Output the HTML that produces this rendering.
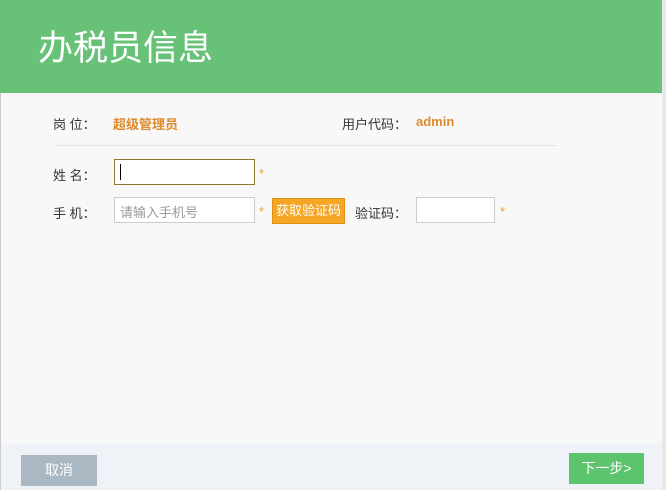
<!DOCTYPE html><html><head><meta charset="utf-8"><style>
*{margin:0;padding:0;box-sizing:border-box}
body{width:666px;height:490px;background:#fff;font-family:"Liberation Sans","Noto Sans CJK SC",sans-serif;font-size:13px;color:#333;position:relative;overflow:hidden}
#p{position:absolute;left:0;top:0;width:662px;height:490px;background:#f8f8f8}
#h{position:absolute;left:0;top:0;width:662px;height:93px;background:#67c278;color:#fff;font-size:35px;padding:29px 0 0 38px;line-height:40px}
.a{position:absolute;white-space:nowrap}
.o{color:#dd8a2a;font-weight:bold}
.in{position:absolute;background:#fff;border:1px solid #ccc;height:26px}
.s{color:#f0a030}
#f{position:absolute;left:0;top:443px;width:662px;height:47px;background:#eff2f6}
.b{position:absolute;color:#fff;font-size:14px;text-align:center;line-height:30px}
#r{position:absolute;left:662px;top:0;width:4px;height:490px;background:#e8e8e8}
</style></head><body>
<div id="p">
<div id="h">办税员信息</div>
<div class="a" style="left:53px;top:114px">岗&nbsp;位：</div>
<div class="a o" style="left:113px;top:114px">超级管理员</div>
<div class="a" style="left:342px;top:114px">用户代码：</div>
<div class="a o" style="left:416px;top:114px">admin</div>
<div class="a" style="left:55px;top:145px;width:502px;height:1px;background:#e4e4e4"></div>
<div class="a" style="left:53px;top:165px">姓&nbsp;名：</div>
<div class="in" style="left:114px;top:159px;width:141px;border-color:#8a7a30"><div style="position:absolute;left:5px;top:4px;width:1px;height:16px;background:#000"></div></div>
<div class="a s" style="left:259px;top:166px">*</div>
<div class="a" style="left:53px;top:203px">手&nbsp;机：</div>
<div class="in" style="left:114px;top:197px;width:141px;color:#999;padding:4px 5px;font-size:13px">请输入手机号</div>
<div class="a s" style="left:259px;top:204px">*</div>
<div class="a" style="left:272px;top:198px;width:73px;height:26px;background:#f5a623;border:1px solid #e0901a;color:#fff;text-align:center;line-height:24px">获取验证码</div>
<div class="a" style="left:355px;top:203px">验证码：</div>
<div class="in" style="left:416px;top:197px;width:79px"></div>
<div class="a s" style="left:500px;top:204px">*</div>
<div id="f">
<div class="b" style="left:21px;top:12px;width:76px;height:31px;background:#a9b8c2">取消</div>
<div class="b" style="left:569px;top:10px;width:75px;height:31px;background:#5dc46e">下一步&gt;</div>
</div>
</div>
<div style="position:absolute;left:0;top:93px;width:1px;height:397px;background:#ccc"></div>
<div id="r"></div>
</body></html>
